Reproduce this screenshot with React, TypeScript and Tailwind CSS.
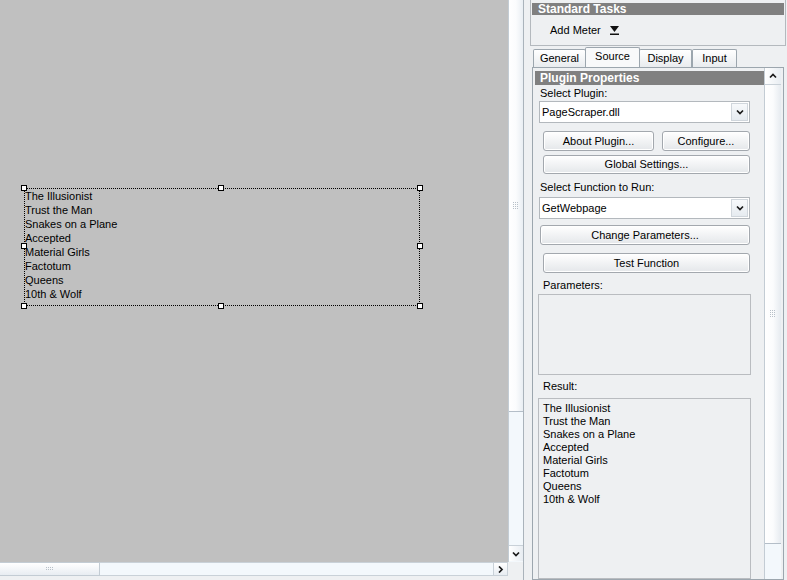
import React from 'react';

const titles = [
  'The Illusionist',
  'Trust the Man',
  'Snakes on a Plane',
  'Accepted',
  'Material Girls',
  'Factotum',
  'Queens',
  '10th & Wolf',
];

const Chevron = ({ dir = 'down' }: { dir?: 'down' | 'up' | 'right' }) => {
  const d =
    dir === 'down' ? 'M1 1.5 L4 4.5 L7 1.5' : dir === 'up' ? 'M1 4.5 L4 1.5 L7 4.5' : 'M2 0.5 L5 3.5 L2 6.5';
  const size = dir === 'right' ? { w: 7, h: 7 } : { w: 8, h: 6 };
  return (
    <svg width={size.w} height={size.h} viewBox={`0 0 ${size.w} ${size.h}`}>
      <path d={d} fill="none" stroke="#1a1a1a" strokeWidth="1.7" />
    </svg>
  );
};

// little dotted grip on scrollbar thumbs
const Grip = ({ cols, rows }: { cols: number; rows: number }) => (
  <svg width={cols * 2} height={rows * 2} viewBox={`0 0 ${cols * 2} ${rows * 2}`}>
    {Array.from({ length: cols * rows }).map((_, i) => (
      <rect key={i} x={(i % cols) * 2} y={Math.floor(i / cols) * 2} width="1" height="1" fill="#b8c0c8" />
    ))}
  </svg>
);

const Handle = ({ className }: { className: string }) => (
  <div className={`absolute w-[6px] h-[6px] bg-white border border-black ${className}`} />
);

const Button = ({ label, className = '' }: { label: string; className?: string }) => (
  <div
    className={`flex items-center justify-center rounded-[3px] border border-[#a3a8ae] bg-gradient-to-b from-white to-[#e4e7ea] shadow-[inset_0_0_0_1px_#ffffff] ${className}`}
  >
    {label}
  </div>
);

const Select = ({ value }: { value: string }) => (
  <div className="ml-[4px] w-[211px] h-[22px] flex items-center bg-white border border-[#b3b8bd]">
    <span className="flex-1 pl-[2px]">{value}</span>
    <div className="w-[17px] h-[18px] mr-[1px] flex items-center justify-center border border-[#d0d6dc] bg-gradient-to-b from-[#f7f9fb] to-[#e6ebf0]">
      <Chevron />
    </div>
  </div>
);

const Tab = ({ label, active, w }: { label: string; active?: boolean; w: string }) => (
  <div
    className={`${w} flex items-center justify-center border border-b-0 border-[#9ca6ae] rounded-t-[2px] ${
      active ? 'h-[20px] bg-[#f8f9fa] pb-[2px] -mx-[1px] relative z-10' : 'h-[18px] bg-gradient-to-b from-white to-[#e9ecef]'
    }`}
  >
    {label}
  </div>
);

export default function App() {
  return (
    <div className="w-[787px] h-[580px] flex overflow-hidden bg-[#eef0f2] text-[11px] leading-[13px] text-black font-['Liberation_Sans',Arial,sans-serif]">
      {/* design canvas + scrollbars */}
      <div className="w-[523px] flex flex-col">
        <div className="h-[562px] flex">
          <div className="w-[508px] bg-[#c0c0c0] relative">
            <div className="absolute left-[24px] top-[188px] w-[396px] h-[118px] border border-dotted border-black">
              <div className="leading-[14px] text-[11px]">
                {titles.map((t) => (
                  <div key={t}>{t}</div>
                ))}
              </div>
              <Handle className="-left-[4px] -top-[4px]" />
              <Handle className="left-[193px] -top-[4px]" />
              <Handle className="-right-[4px] -top-[4px]" />
              <Handle className="-left-[4px] top-[54px]" />
              <Handle className="-right-[4px] top-[54px]" />
              <Handle className="-left-[4px] -bottom-[4px]" />
              <Handle className="left-[193px] -bottom-[4px]" />
              <Handle className="-right-[4px] -bottom-[4px]" />
            </div>
          </div>
          <div className="w-[15px] flex flex-col bg-[#f3f8fc] border-l border-[#c3ccd4]">
            <div className="h-[412px] flex items-center justify-center border-b border-[#b4bec8] bg-gradient-to-r from-white via-[#fbfcfd] to-[#e9eef3]">
              <Grip cols={3} rows={4} />
            </div>
            <div className="flex-1" />
            <div className="h-[16px] flex items-center justify-center border-t border-[#c9d1d8] bg-gradient-to-r from-white to-[#e8edf2] mb-[1px]">
              <Chevron />
            </div>
          </div>
        </div>
        <div className="h-[14px] flex">
          <div className="w-[100px] flex items-center justify-center border-y border-r border-[#c3ccd4] bg-gradient-to-b from-white to-[#e8edf2]">
            <Grip cols={4} rows={2} />
          </div>
          <div className="flex-1 bg-[#f3f8fc] border-y border-[#c9d1d8]" />
          <div className="w-[15px] flex items-center justify-center border border-[#c9d1d8] bg-gradient-to-b from-white to-[#e8edf2]">
            <Chevron dir="right" />
          </div>
          <div className="w-[15px] bg-[#eef0f2]" />
        </div>
        <div className="flex-1 bg-[#eef0f2]" />
      </div>

      {/* property panel */}
      <div className="w-[264px] flex flex-col border-l border-[#aab3bb] pl-[6px]">
        <div className="pt-[3px] border-l border-r border-b border-[#b4b9be] mr-[1px]">
          <div className="h-[12px] mx-[1px] bg-[#808080] text-white font-bold text-[12px] leading-[12px] pl-[6px]">
            Standard Tasks
          </div>
          <div className="h-[30px] flex items-center pl-[19px] gap-[9px]">
            <span>Add Meter</span>
            <svg width="9" height="10" viewBox="0 0 9 10">
              <polygon points="0,1 9,1 4.5,7" fill="#111" />
              <rect x="0" y="8.5" width="9" height="1.5" fill="#111" />
            </svg>
          </div>
        </div>

        <div className="h-[20px] mt-[1px] flex items-end pl-[3px]">
          <Tab label="General" w="w-[53px]" />
          <Tab label="Source" w="w-[55px]" active />
          <Tab label="Display" w="w-[53px]" />
          <Tab label="Input" w="w-[45px]" />
        </div>

        <div className="flex-1 ml-[2px] mr-[3px] flex border border-[#9ca6ae] bg-[#eef0f2] relative">
          <div className="w-[231px] pl-[2px] pt-[3px] flex flex-col">
            <div className="h-[14px] bg-[#808080] text-white font-bold text-[12px] leading-[14px] pl-[5px]">
              Plugin Properties
            </div>
            <div className="mt-[2px] pl-[5px]">Select Plugin:</div>
            <div className="mt-[1px]">
              <Select value="PageScraper.dll" />
            </div>
            <div className="mt-[8px] ml-[8px] flex">
              <Button label="About Plugin..." className="w-[111px] h-[20px]" />
              <Button label="Configure..." className="w-[88px] h-[20px] ml-[8px]" />
            </div>
            <Button label="Global Settings..." className="mt-[4px] ml-[8px] w-[207px] h-[19px]" />
            <div className="mt-[7px] pl-[5px]">Select Function to Run:</div>
            <div className="mt-[3px]">
              <Select value="GetWebpage" />
            </div>
            <Button label="Change Parameters..." className="mt-[6px] ml-[5px] w-[210px] h-[20px]" />
            <Button label="Test Function" className="mt-[8px] ml-[8px] w-[207px] h-[20px]" />
            <div className="mt-[6px] pl-[8px]">Parameters:</div>
            <div className="mt-[2px] ml-[3px] w-[213px] h-[81px] border border-[#b9bcc0]" />
            <div className="mt-[5px] pl-[8px]">Result:</div>
            <div className="mt-[5px] ml-[3px] w-[213px] flex-1 border border-[#b9bcc0] pl-[4px] pt-[3px]">
              {titles.map((t) => (
                <div key={t}>{t}</div>
              ))}
            </div>
          </div>
          <div className="w-[17px] flex flex-col border-l border-[#c3ccd4] bg-[#f3f8fc]">
            <div className="h-[17px] flex items-center justify-center border-b border-[#c9d1d8] bg-gradient-to-r from-white to-[#e8edf2]">
              <Chevron dir="up" />
            </div>
            <div className="h-[459px] flex items-center justify-center border-b border-[#b4bec8] bg-gradient-to-r from-white via-[#fbfcfd] to-[#e6ebf0]">
              <Grip cols={3} rows={4} />
            </div>
            <div className="flex-1" />
          </div>
        </div>
      </div>
    </div>
  );
}
